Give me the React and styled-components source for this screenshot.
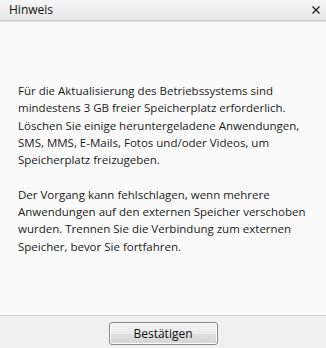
import React from "react";
import styled, { createGlobalStyle } from "styled-components";

const Global = createGlobalStyle`
  html, body { margin: 0; padding: 0; }
  body { width: 326px; height: 348px; overflow: hidden; }
  #root { height: 100%; }
`;

const Dialog = styled.div`
  display: flex;
  flex-direction: column;
  width: 326px;
  height: 348px;
  font-family: "Open Sans", "Noto Sans", sans-serif;
  color: #1a1a1a;
  background: #fafafa;
`;

const TitleBar = styled.div`
  display: flex;
  align-items: center;
  justify-content: space-between;
  height: 19px;
  padding: 0 6px 1px 9px;
  background: linear-gradient(#f6f6f6, #e6e6e6);
  border-bottom: 1px solid #c8c8c8;
  box-shadow: 0 1px 0 #e2e2e2;
  margin-bottom: 1px;
`;

const Title = styled.span`
  font-size: 12px;
  color: #111;
`;

const Close = styled.svg`
  display: block;
  width: 8px;
  height: 8px;
`;

const Body = styled.div`
  flex: 1;
  display: flex;
  flex-direction: column;
  justify-content: center;
  gap: 17px;
  padding: 0 18px;
`;

const Para = styled.p`
  margin: 0;
  font-size: 11.5px;
  line-height: 17.3px;
`;

const Footer = styled.div`
  display: flex;
  justify-content: center;
  align-items: flex-start;
  height: 33px;
  padding-top: 6px;
  box-sizing: border-box;
  background: #f0f0f0;
  border-top: 1px solid #d4d4d4;
`;

const Button = styled.button`
  width: 109px;
  height: 23px;
  padding: 0;
  font-family: inherit;
  font-size: 12px;
  color: #111;
  border: 1px solid #8a8a8a;
  border-radius: 3px;
  background: linear-gradient(#f4f4f4 0%, #ececec 50%, #dedede 51%, #d6d6d6 100%);
  box-shadow: inset 0 0 0 1px #fbfbfb;
`;

export default function App() {
  return (
    <>
      <Global />
      <Dialog>
        <TitleBar>
          <Title>Hinweis</Title>
          <Close viewBox="0 0 8 8">
            <path d="M0.5 0.5 L7.5 7.5 M7.5 0.5 L0.5 7.5" stroke="#222" strokeWidth="1.3" />
          </Close>
        </TitleBar>
        <Body>
          <Para>
            Für die Aktualisierung des Betriebssystems sind mindestens 3 GB
            freier Speicherplatz erforderlich. Löschen Sie einige
            heruntergeladene Anwendungen, SMS, MMS, E-Mails, Fotos und/oder
            Videos, um Speicherplatz freizugeben.
          </Para>
          <Para>
            Der Vorgang kann fehlschlagen, wenn mehrere Anwendungen auf den
            externen Speicher verschoben wurden. Trennen Sie die Verbindung zum
            externen Speicher, bevor Sie fortfahren.
          </Para>
        </Body>
        <Footer>
          <Button>Bestätigen</Button>
        </Footer>
      </Dialog>
    </>
  );
}
